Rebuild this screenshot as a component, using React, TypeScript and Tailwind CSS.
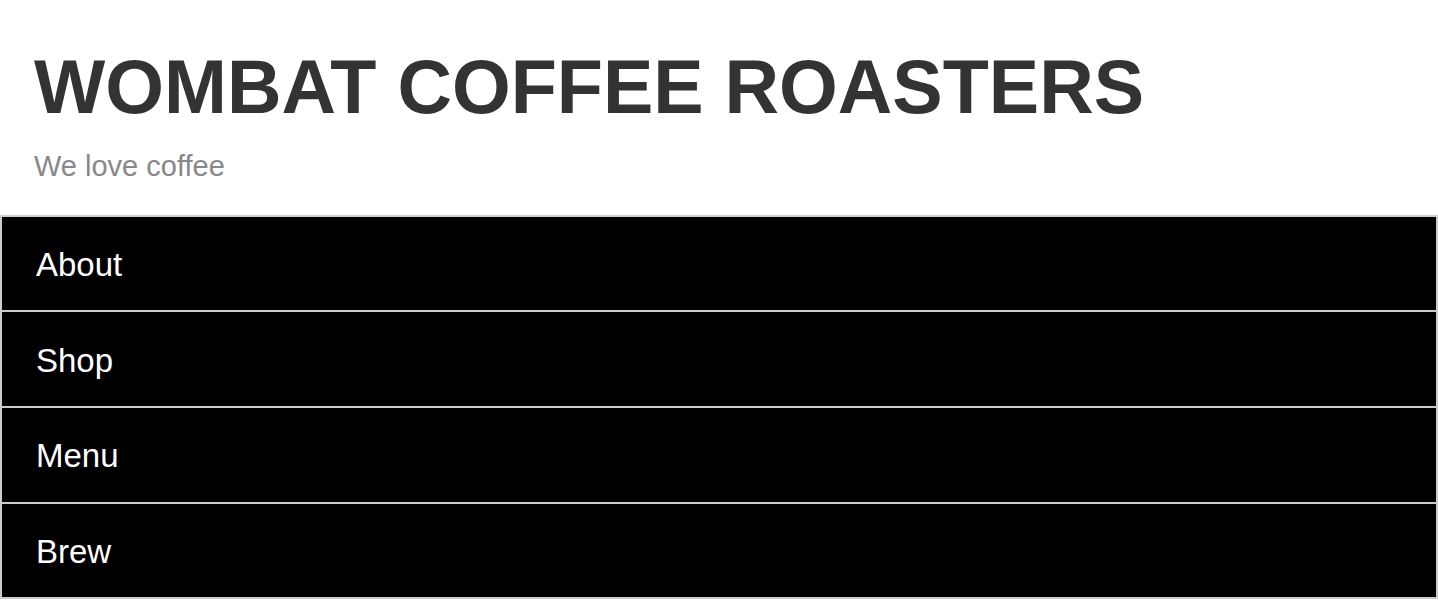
import React from 'react'

const links = ['About', 'Shop', 'Menu', 'Brew']

export default function App() {
  return (
    <div className="min-h-screen bg-white font-['Liberation_Sans',Arial,sans-serif]">
      <header className="pt-[50px] pb-[34px] px-[34px]">
        <h1 className="text-[75.5px] leading-none font-bold text-[#333333]">
          WOMBAT COFFEE ROASTERS
        </h1>
        <p className="mt-[26px] text-[29px] leading-none text-[#888888]">
          We love coffee
        </p>
      </header>

      <nav>
        <ul className="border-2 border-[#cccccc] bg-black">
          {links.map((link, i) => (
            <li
              key={link}
              className={
                i === 0
                  ? 'h-[93.7px] flex items-center px-[34px] pt-[2px]'
                  : 'h-[95.7px] flex items-center px-[34px] pt-[2px] border-t-2 border-[#cccccc]'
              }
            >
              <a href="#" className="text-[33px] leading-none text-white">
                {link}
              </a>
            </li>
          ))}
        </ul>
      </nav>
    </div>
  )
}
